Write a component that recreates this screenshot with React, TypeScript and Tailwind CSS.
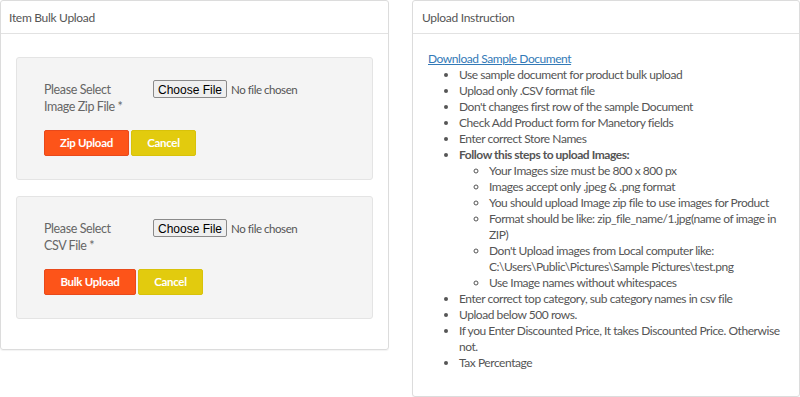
import React from "react";

const font = { fontFamily: "Lato, 'Noto Sans', sans-serif" };

function UploadBox({ label1, label2, action, actionW, cancelW }: { label1: string; label2: string; action: string; actionW: string; cancelW: string }) {
  return (
    <div className="rounded-[3px] border border-[#e4e4e4] bg-[#f4f4f4] pl-[27px] pt-[22px] pb-[23px]">
      <div className="flex">
        <div className="w-[109px] shrink-0 text-[12.5px] leading-[17px] tracking-[-0.4px] text-[#666] pt-[1px]">
          <div>{label1}</div>
          <div>{label2}</div>
        </div>
        <input
          type="file"
          className="w-[160px] text-[11.5px] tracking-[-0.45px] text-[#555] h-[18px] file:mr-[4px] file:h-[18px] file:rounded-[2px] file:border file:border-[#8a8a8a] file:bg-[#efefef] file:px-[4px] file:text-[12px] file:tracking-normal file:text-black file:font-['Liberation_Sans']"
        />
      </div>
      <div className="mt-[15px] flex gap-[2px]">
        <button className={`${actionW} h-[26px] rounded-[2px] border border-[#e8491b] bg-[#fd5419] text-[11.5px] tracking-[-0.3px] font-bold text-white`}>{action}</button>
        <button className={`${cancelW} h-[26px] rounded-[2px] border border-[#d8c20a] bg-[#e2cb0e] text-[11.5px] tracking-[-0.3px] font-bold text-white`}>Cancel</button>
      </div>
    </div>
  );
}

const items = [
  "Use sample document for product bulk upload",
  "Upload only .CSV format file",
  "Don't changes first row of the sample Document",
  "Check Add Product form for Manetory fields",
  "Enter correct Store Names",
];

const subItems = [
  "Your Images size must be 800 x 800 px",
  "Images accept only .jpeg & .png format",
  "You should upload Image zip file to use images for Product",
  "Format should be like: zip_file_name/1.jpg(name of image in ZIP)",
  "Don't Upload images from Local computer like: C:\\Users\\Public\\Pictures\\Sample Pictures\\test.png",
  "Use Image names without whitespaces",
];

const after = [
  "Enter correct top category, sub category names in csv file",
  "Upload below 500 rows.",
  "If you Enter Discounted Price, It takes Discounted Price. Otherwise not.",
  "Tax Percentage",
];

export default function App() {
  return (
    <div className="w-[800px] h-[397px] bg-white flex gap-[23px] items-start" style={font}>
      <div className="w-[389px] h-[350px] rounded-[3px] border border-[#dcdcdc] shadow-[0_1px_1px_rgba(0,0,0,0.05)]">
        <div className="h-[33px] border-b border-[#e2e2e2] pl-[8px] pt-[8px] text-[12px] tracking-[-0.3px] text-[#555]">Item Bulk Upload</div>
        <div className="px-[15px] pt-[23px] flex flex-col gap-[16px]">
          <UploadBox label1="Please Select" label2="Image Zip File *" action="Zip Upload" actionW="w-[85px]" cancelW="w-[65px]" />
          <UploadBox label1="Please Select" label2="CSV File *" action="Bulk Upload" actionW="w-[92px]" cancelW="w-[65px]" />
        </div>
      </div>
      <div className="w-[388px] h-[397px] rounded-[3px] border border-[#dcdcdc] shadow-[0_1px_1px_rgba(0,0,0,0.05)]">
        <div className="h-[33px] border-b border-[#e2e2e2] pl-[9px] pt-[8px] text-[12px] tracking-[-0.3px] text-[#555]">Upload Instruction</div>
        <div className="pl-[15px] pr-[10px] pt-[17px] text-[12px] leading-[16px] tracking-[-0.45px] text-[#555]">
          <a className="text-[#337ab7] underline">Download Sample Document</a>
          <ul className="list-disc pl-[31px]">
            {items.map((t) => (
              <li key={t}>{t}</li>
            ))}
            <li className="font-bold">
              Follow this steps to upload Images:
              <ul className="list-[circle] pl-[30px] font-normal">
                {subItems.map((t) => (
                  <li key={t}>{t}</li>
                ))}
              </ul>
            </li>
            {after.map((t) => (
              <li key={t}>{t}</li>
            ))}
          </ul>
        </div>
      </div>
    </div>
  );
}
